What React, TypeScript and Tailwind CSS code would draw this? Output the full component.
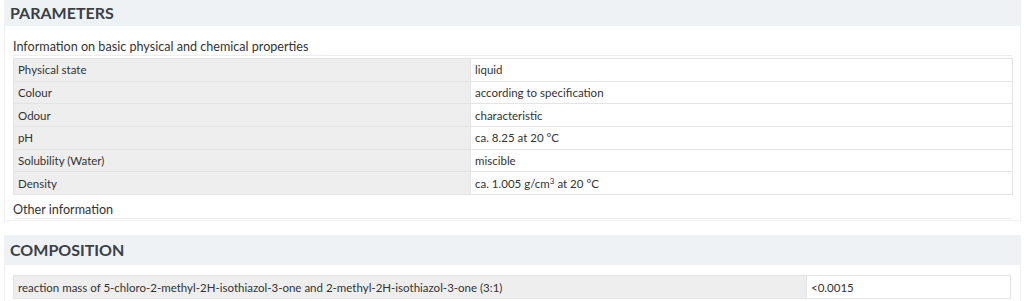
import React from 'react';

const properties = [
  { label: 'Physical state', value: <>liquid</> },
  { label: 'Colour', value: <>according to specification</> },
  { label: 'Odour', value: <>characteristic</> },
  { label: 'pH', value: <>ca. 8.25 at 20 °C</> },
  { label: 'Solubility (Water)', value: <>miscible</> },
  {
    label: 'Density',
    value: (
      <>
        ca. 1.005 g/cm<sup className="text-[8px]">3</sup> at 20 °C
      </>
    ),
  },
];

const SectionHeader = ({ title, className }: { title: string; className: string }) => (
  <div className={`bg-[#eff2f5] flex items-center px-[6px] ${className}`}>
    <h2 className="text-[16px] font-bold text-[#3b4046]">{title}</h2>
  </div>
);

const App = () => {
  return (
    <div className="w-[1024px] h-[301px] bg-white font-['Lato',sans-serif] text-[#333]">
      <div className="mx-[4px] w-[1017px]">
        <SectionHeader title="PARAMETERS" className="h-[26px] pb-[1px]" />
        <div className="border border-t-0 border-[#f0f0f0] px-[8px] pt-[12px] pb-[1px]">
          <div className="text-[12.6px] border-b border-[#eee] leading-[17px]">
            Information on basic physical and chemical properties
          </div>
          <table className="w-[1000px] mt-[2px] border border-[#e2e4e6] border-collapse text-[11.5px]">
            <tbody>
              {properties.map(p => (
                <tr key={p.label} className="h-[22.7px] border-b border-[#e2e4e6]">
                  <td className="bg-[#eeeeee] w-[457px] pl-[4px] py-0">{p.label}</td>
                  <td className="bg-white pl-[4px] py-0 border-l border-[#e2e4e6]">{p.value}</td>
                </tr>
              ))}
            </tbody>
          </table>
          <div className="text-[12.6px] border-b border-[#eee] mt-[6px] leading-[17px]">
            Other information
          </div>
        </div>

        <div className="mt-[14px]">
          <SectionHeader title="COMPOSITION" className="h-[30px]" />
          <div className="border border-t-0 border-[#f0f0f0] px-[8px] pt-[10px] pb-[2px]">
            <table className="w-[998px] border border-[#e2e4e6] border-collapse text-[11.5px]">
              <tbody>
                <tr className="h-[23px]">
                  <td className="bg-[#eeeeee] w-[793px] pl-[4px]">
                    reaction mass of 5-chloro-2-methyl-2H-isothiazol-3-one and 2-methyl-2H-isothiazol-3-one (3:1)
                  </td>
                  <td className="bg-white pl-[4px] border-l border-[#e2e4e6]">&lt;0.0015</td>
                </tr>
              </tbody>
            </table>
          </div>
        </div>
      </div>
    </div>
  );
};

export default App;
